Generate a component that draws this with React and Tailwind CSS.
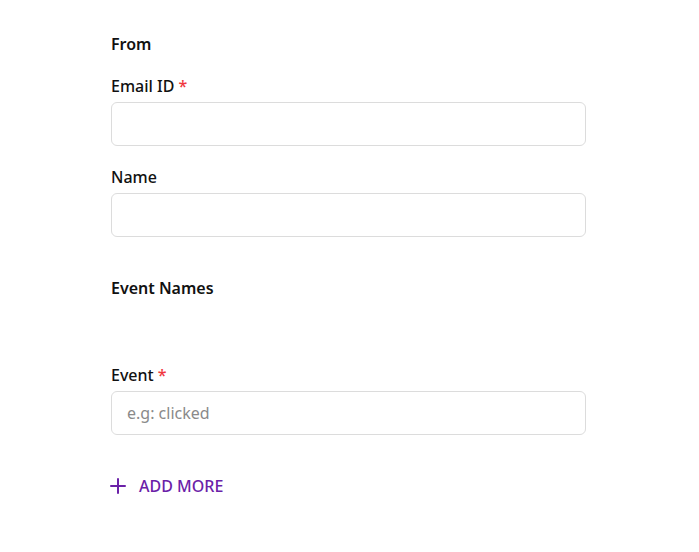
import { Plus } from 'lucide-react'

function Field({ label, required, placeholder }) {
  return (
    <div className="flex flex-col">
      <label className="text-[16px] leading-[22px] font-medium text-[#111]">
        {label}
        {required && <span className="text-[#f0383e] ml-1">*</span>}
      </label>
      <input
        type="text"
        placeholder={placeholder}
        className="mt-[5px] h-[44px] w-full rounded-md border border-[#dcdcdc] bg-white px-[15px] text-[16px] text-[#111] outline-none placeholder:text-[#8a8a8a]"
      />
    </div>
  )
}

export default function App() {
  return (
    <div
      className="min-h-screen bg-white"
      style={{ fontFamily: '"Noto Sans", "Open Sans", sans-serif' }}
    >
      <div className="ml-[111px] w-[475px] pt-[33px]">
        <h3 className="text-[16px] leading-[22px] font-semibold text-[#111]">From</h3>

        <div className="mt-[20px]">
          <Field label="Email ID" required />
        </div>
        <div className="mt-[20px]">
          <Field label="Name" />
        </div>

        <h3 className="mt-[40px] text-[16px] leading-[22px] font-semibold text-[#111]">Event Names</h3>

        <div className="mt-[65px]">
          <Field label="Event" required placeholder="e.g: clicked" />
        </div>

        <button className="mt-[39px] -ml-[5px] flex items-center gap-[9px] text-[16px] leading-[24px] font-medium text-[#6b21a8]">
          <Plus size={24} strokeWidth={2} />
          ADD MORE
        </button>
      </div>
    </div>
  )
}
